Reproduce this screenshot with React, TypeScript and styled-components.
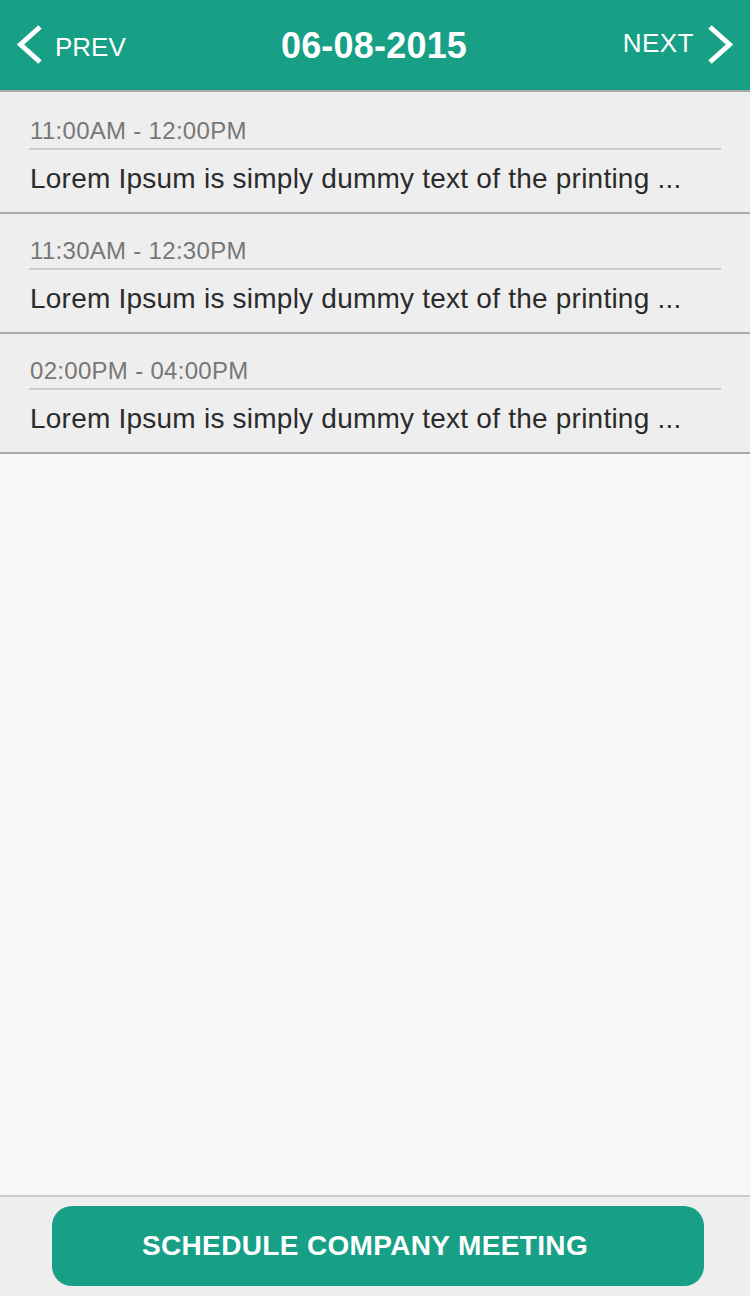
import React from "react";
import styled, { createGlobalStyle } from "styled-components";

const GREEN = "#17a085";

const Global = createGlobalStyle`
  html, body { margin: 0; padding: 0; }
  body {
    font-family: "Liberation Sans", Arial, Helvetica, sans-serif;
    background: #f7f7f7;
  }
  * { box-sizing: border-box; }
`;

const Page = styled.div`
  height: 1296px;
  display: flex;
  flex-direction: column;
  background: #f7f7f7;
`;

const Header = styled.header`
  height: 92px;
  flex: none;
  background: ${GREEN};
  border-bottom: 2px solid #aaaaaa;
  display: grid;
  grid-template-columns: 1fr auto 1fr;
  align-items: center;
  color: #ffffff;
`;

const NavButton = styled.div<{ $side: "left" | "right" }>`
  display: flex;
  align-items: center;
  justify-self: ${(p) => (p.$side === "left" ? "start" : "end")};
  padding-left: ${(p) => (p.$side === "left" ? "15px" : "0")};
  padding-right: ${(p) => (p.$side === "right" ? "15px" : "0")};
  gap: ${(p) => (p.$side === "left" ? "10px" : "11px")};
`;

const NavLabel = styled.span<{ $shift: number; $spacing: number }>`
  font-size: 26px;
  line-height: 26px;
  letter-spacing: ${(p) => p.$spacing}px;
  position: relative;
  top: ${(p) => p.$shift}px;
`;

const Title = styled.h1`
  margin: 0;
  font-size: 36px;
  line-height: 36px;
  font-weight: bold;
  letter-spacing: 0.2px;
  position: relative;
  top: 1px;
  left: -1px;
`;

const List = styled.div`
  flex: none;
  padding-top: 2px;
  background: #eeeeee;
`;

const Row = styled.div`
  height: 120px;
  padding: 23px 29px 17px;
  border-bottom: 2px solid #aaaaaa;
  background: #eeeeee;
`;

const Time = styled.div`
  font-size: 24px;
  line-height: 28px;
  color: #777777;
  letter-spacing: 0.3px;
  padding-bottom: 3px;
  padding-left: 1px;
  border-bottom: 2px solid #cccccc;
`;

const Desc = styled.div`
  font-size: 28px;
  line-height: 32px;
  color: #2b2b2b;
  letter-spacing: 0.23px;
  margin-top: 13px;
  padding-left: 1px;
  white-space: nowrap;
`;

const Spacer = styled.div`
  flex: 1;
  background: #f7f7f7;
`;

const Footer = styled.footer`
  flex: none;
  height: 101px;
  border-top: 2px solid #cccccc;
  background: #eeeeee;
  padding: 9px 46px 10px 52px;
  display: flex;
`;

const ScheduleButton = styled.button`
  flex: 1;
  border: none;
  border-radius: 20px;
  background: ${GREEN};
  color: #ffffff;
  font-family: "Liberation Sans", Arial, Helvetica, sans-serif;
  font-size: 28px;
  font-weight: bold;
  letter-spacing: 0.35px;
  padding: 0 26px 0 0;
  cursor: pointer;
`;

const Chevron: React.FC<{ dir: "left" | "right" }> = ({ dir }) => (
  <svg
    width="30"
    height="44"
    viewBox="0 0 30 44"
    style={{ display: "block", transform: dir === "right" ? "scaleX(-1)" : undefined }}
  >
    <polyline
      points="25,4 5.5,21.5 25,39"
      fill="none"
      stroke="#ffffff"
      strokeWidth="5"
      strokeLinecap="butt"
      strokeLinejoin="miter"
    />
  </svg>
);

const events = [
  { time: "11:00AM - 12:00PM", text: "Lorem Ipsum is simply dummy text of the printing ..." },
  { time: "11:30AM - 12:30PM", text: "Lorem Ipsum is simply dummy text of the printing ..." },
  { time: "02:00PM - 04:00PM", text: "Lorem Ipsum is simply dummy text of the printing ..." },
];

export default function App() {
  return (
    <>
      <Global />
      <Page>
        <Header>
          <NavButton $side="left">
            <Chevron dir="left" />
            <NavLabel $shift={2} $spacing={0}>PREV</NavLabel>
          </NavButton>
          <Title>06-08-2015</Title>
          <NavButton $side="right">
            <NavLabel $shift={-2} $spacing={0.5}>NEXT</NavLabel>
            <Chevron dir="right" />
          </NavButton>
        </Header>
        <List>
          {events.map((e, i) => (
            <Row key={i}>
              <Time>{e.time}</Time>
              <Desc>{e.text}</Desc>
            </Row>
          ))}
        </List>
        <Spacer />
        <Footer>
          <ScheduleButton>SCHEDULE COMPANY MEETING</ScheduleButton>
        </Footer>
      </Page>
    </>
  );
}
